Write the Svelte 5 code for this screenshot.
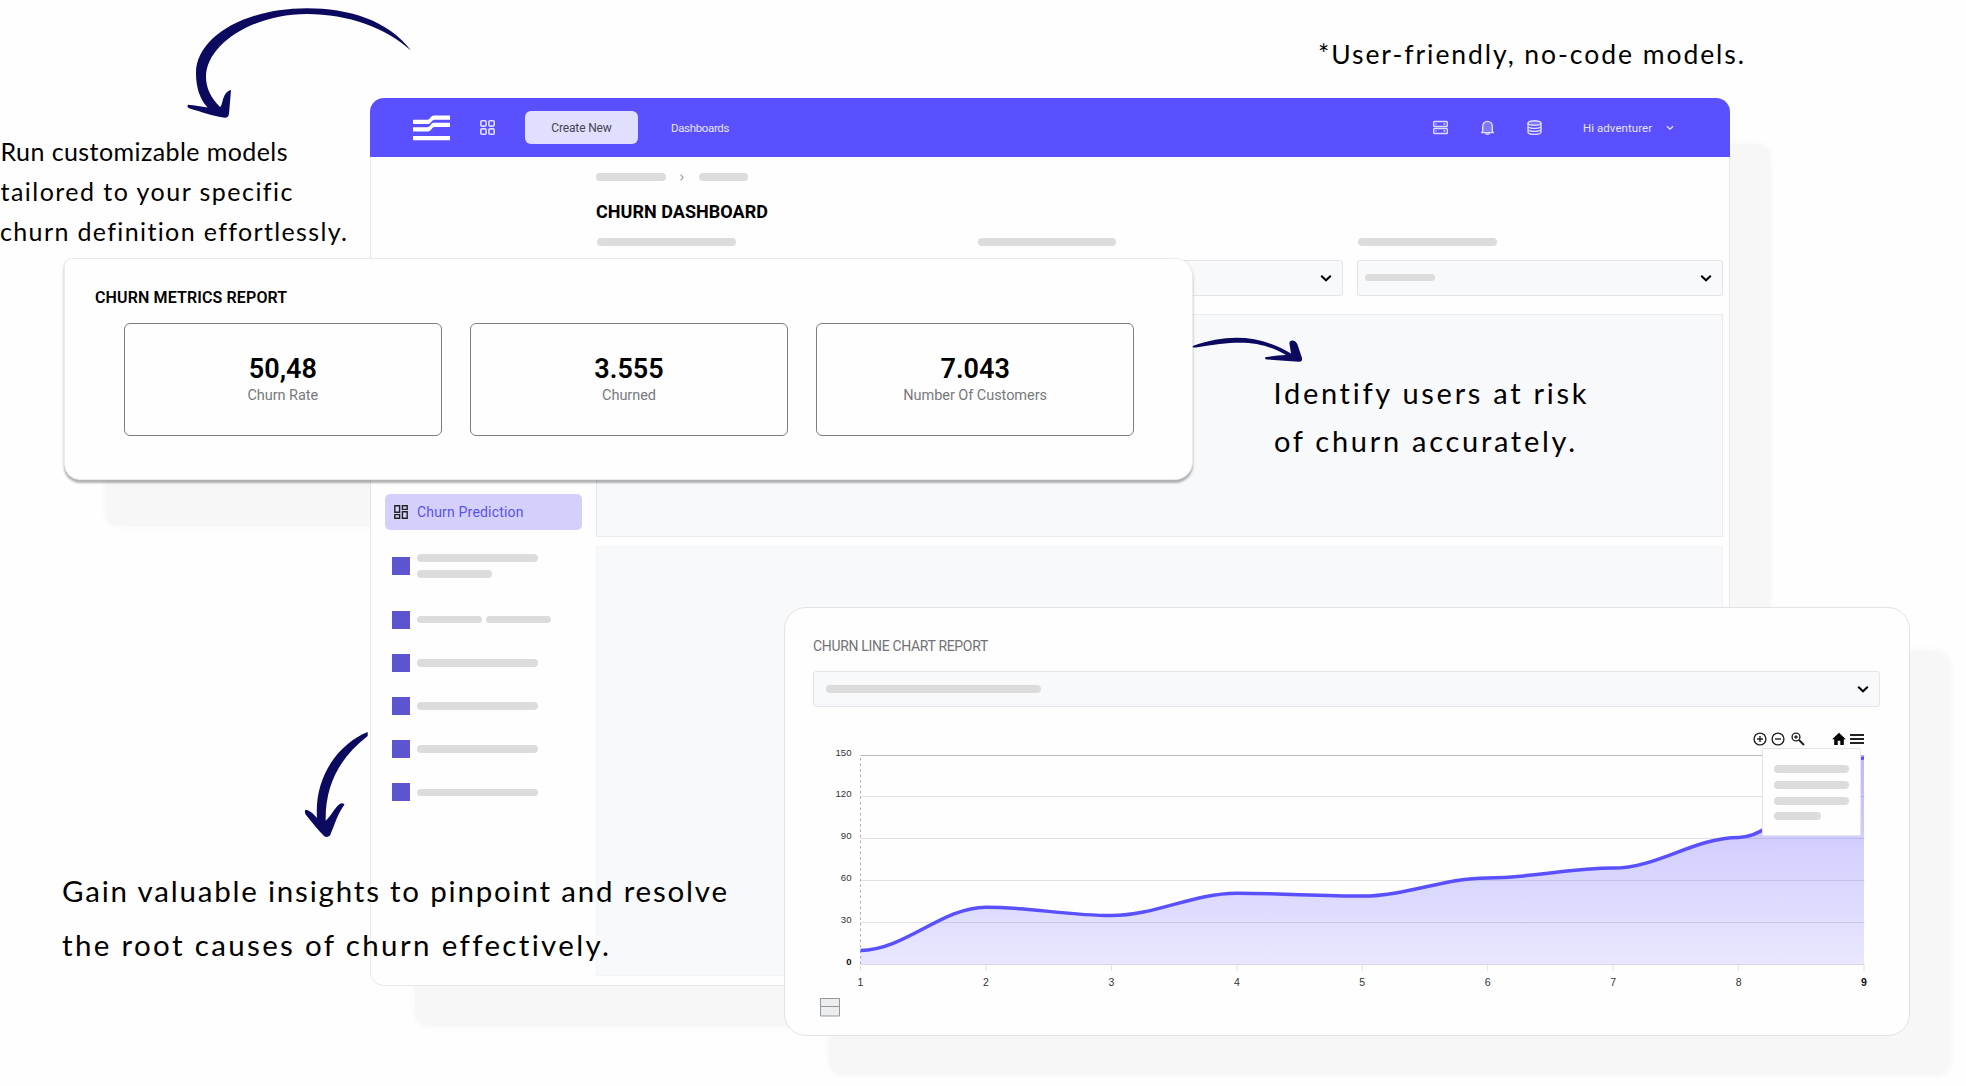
<script lang="ts">
    const notes = [
        { text: "Run customizable models", x: 0.5, y: 160.5, width: 287, size: 25 },
        { text: "tailored to your specific", x: 0.5, y: 200.5, width: 292, size: 25 },
        { text: "churn definition effortlessly.", x: 0, y: 240.5, width: 347, size: 25 },
        { text: "*User-friendly, no-code models.", x: 1318, y: 64, width: 426, size: 26.5 },
        { text: "Identify users at risk", x: 1273.5, y: 403.5, width: 313, size: 29 },
        { text: "of churn accurately.", x: 1274, y: 451.5, width: 301, size: 29 },
        { text: "Gain valuable insights to pinpoint and resolve", x: 62, y: 902, width: 665, size: 29.5 },
        { text: "the root causes of churn effectively.", x: 62, y: 956, width: 547, size: 29.5 },
    ];

    const metrics = [
        { value: "50,48", label: "Churn Rate" },
        { value: "3.555", label: "Churned" },
        { value: "7.043", label: "Number Of Customers" },
    ];

    const points: number[] = [10, 41, 35, 51, 49, 62, 69, 91, 148];
    const levels: number[] = [150, 120, 90, 60, 30, 0];
    const left = 47.5;
    const step = 125.44;
    const bottom = 218.4;

    const px = (i: number) => left + i * step;
    const py = (v: number) => bottom - (v * 209.3) / 150;

    // horizontal handles at every point, 35% of the gap long
    const line = points.reduce((path, v, i) => {
        if (i === 0) return `M${px(0)} ${py(v)}`;
        const h = step * 0.35;
        return `${path} C${px(i - 1) + h} ${py(points[i - 1])} ${px(i) - h} ${py(v)} ${px(i)} ${py(v)}`;
    }, "");
    const area = `${line} V${bottom} H${left} Z`;
</script>

{#snippet chevron()}
    <svg class="chevron" width="12" height="8" viewBox="0 0 12 8">
        <path d="M1.2 1.7 6 6.300l4.8-4.600" />
    </svg>
{/snippet}

<div class="stage">
    <div class="shade shade-window"></div>
    <div class="shade shade-metrics"></div>
    <div class="shade shade-chart"></div>

    <div class="window">
        <header>
            <svg class="logo" width="37" height="26" viewBox="0 0 37 26">
                <path d="M0 4.7h14.5c3 0 3-4.2 6.5-4.2h16v4.2H21.500c-3 0-3 4.2-6.500 4.2H0z" />
                <path d="M0 12.200h14.500c3 0 3-4.400 6.500-4.400h16v4.300H21.500c-3 0-3 4.400-6.500 4.400H0z" />
                <path d="M0 20.900h37v4.300H0z" />
            </svg>
            <svg class="grid-icon" width="15" height="15" viewBox="0 0 15 15">
                <rect x=".8" y=".8" width="5.300" height="5.300" rx="1" />
                <rect x="8.900" y=".8" width="5.300" height="5.300" rx="1" />
                <rect x=".8" y="8.900" width="5.300" height="5.300" rx="1" />
                <rect x="8.900" y="8.900" width="5.300" height="5.300" rx="1" />
            </svg>
            <button>Create New</button>
            <span class="nav">Dashboards</span>
            <div class="tools">
                <svg width="15" height="15" viewBox="0 0 15 15">
                    <rect x=".7" y="1.500" width="13.600" height="5" rx=".8" />
                    <rect x=".7" y="8.500" width="13.600" height="5" rx=".8" />
                    <path d="M10.500 4h1.800M2.500 4h1M10.500 11h1.800M2.500 11h1" />
                </svg>
                <svg width="15" height="15" viewBox="0 0 15 15">
                    <path class="tint" d="M2.700 12V6.200a4.800 4.800 0 0 1 9.600 0V12l1.600.6H1.100z" />
                    <path d="M5.600 13c.3 1.700 3.500 1.700 3.800 0" />
                </svg>
                <svg width="15" height="15" viewBox="0 0 15 15">
                    <ellipse class="tint" cx="7.500" cy="3" rx="6.500" ry="2.300" />
                    <path d="M1 3v9c0 3.200 13 3.200 13 0V3M1 6c0 3.200 13 3.200 13 0M1 9c0 3.200 13 3.200 13 0" />
                </svg>
            </div>
            <span class="user">Hi adventurer</span>
            <svg class="caret" width="8" height="6" viewBox="0 0 8 6">
                <path d="M1 1.200l3 3 3-3" />
            </svg>
        </header>

        <div class="body">
            <aside>
                <div class="active">
                    <svg width="14" height="14" viewBox="0 0 14 14">
                        <path d="M.8.8h4.800v6.400H.8zM8.400.8h4.800v3.600H8.400zM.8 9.600h4.800v3.600H.8zM8.400 6.800h4.800v6.400H8.400z" />
                    </svg>
                    Churn Prediction
                </div>
                <ul>
                    <li class="tall">
                        <i class="square"></i>
                        <div class="stack">
                            <i class="bar w122"></i>
                            <i class="bar w75"></i>
                        </div>
                    </li>
                    <li><i class="square"></i><i class="bar w66"></i><i class="bar w66 next"></i></li>
                    {#each [3, 4, 5, 6] as row (row)}
                        <li><i class="square"></i><i class="bar w122"></i></li>
                    {/each}
                </ul>
            </aside>

            <main>
                <div class="crumbs">
                    <i class="bar w70"></i>
                    <svg width="4" height="7" viewBox="0 0 4 7"><path d="M.6.6l2.500 2.900L.6 6.400" /></svg>
                    <i class="bar w50"></i>
                </div>
                <h1>CHURN DASHBOARD</h1>
                <div class="filters">
                    {#each [1, 2, 3] as filter (filter)}
                        <div>
                            <i class="bar label"></i>
                            <div class="select">
                                <i class="bar w70"></i>
                                {@render chevron()}
                            </div>
                        </div>
                    {/each}
                </div>
                <div class="panel small"></div>
                <div class="panel large"></div>
            </main>
        </div>
    </div>

    <section class="metrics">
        <h2>CHURN METRICS REPORT</h2>
        <div class="cards">
            {#each metrics as metric (metric.label)}
                <div class="card">
                    <strong>{metric.value}</strong>
                    <span>{metric.label}</span>
                </div>
            {/each}
        </div>
    </section>

    <section class="report">
        <h3>CHURN LINE CHART REPORT</h3>
        <div class="select">
            <i class="bar w215"></i>
            {@render chevron()}
        </div>
        <div class="toolbar">
            <svg width="14" height="14" viewBox="0 0 14 14">
                <circle cx="7" cy="7" r="5.900" /><path d="M7 4v6M4 7h6" />
            </svg>
            <svg class="minus" width="14" height="14" viewBox="0 0 14 14">
                <circle cx="7" cy="7" r="5.900" /><path d="M4 7h6" />
            </svg>
            <svg class="lens" width="14" height="14" viewBox="0 0 14 14">
                <circle cx="5" cy="5" r="3.900" />
                <path d="M5 3.200v3.600M3.200 5h3.600" />
                <path class="thick" d="M8 8l5 5" />
            </svg>
            <svg class="home" width="14" height="14" viewBox="0 0 14 14">
                <path d="M7 .8.200 7.200h2V13h3.500V8.800h2.600V13h3.500V7.200h2z" />
            </svg>
            <svg class="burger" width="14" height="14" viewBox="0 0 14 14">
                <path d="M0 3h14M0 7h14M0 11h14" />
            </svg>
        </div>
        <svg class="chart" width="1067" height="274" viewBox="0 0 1067 274">
            <defs>
                <linearGradient id="fade" x1="0" y1="0" x2="0" y2="1">
                    <stop offset="0" stop-color="#5b50ff" stop-opacity=".4" />
                    <stop offset=".45" stop-color="#5b50ff" stop-opacity=".26" />
                    <stop offset="1" stop-color="#5b50ff" stop-opacity=".13" />
                </linearGradient>
            </defs>
            {#each levels as level (level)}
                <path
                    class="grid-line"
                    class:top={level === 150}
                    d="M{left} {Math.floor(py(level)) + 0.5}H1051.500"
                />
                <text class="tick" class:bold={level === 0} x="38.500" y={py(level) + 0.5}>{level}</text>
            {/each}
            <path class="axis" d="M47.500 12V219" />
            <path fill="url(#fade)" d={area} />
            <path class="line" d={line} />
            {#each points as _, i (i)}
                <path class="grid-line" d="M{px(i)} 219v6" />
                <text class="number" class:bold={i === 8} x={px(i)} y="240">{i + 1}</text>
            {/each}
            <path class="legend" d="M7.500 252.500h19v17.500h-19zM7.500 260.500h19" />
        </svg>
        <div class="menu">
            <i class="bar"></i>
            <i class="bar"></i>
            <i class="bar"></i>
            <i class="bar short"></i>
        </div>
    </section>

    <svg class="notes" width="1966" height="1086" viewBox="0 0 1966 1086">
        <path d="M411 50.500C388 20 348 8.300 307 8.300C243 8.300 196 38 196 73C196 88 200 99 207.500 107.500C201 106.500 195 105.500 188 104.800Q186.500 107 189 108.200C202 112 212 116 225 117.800Q228.500 117.500 229 114L231 90C226 91 224 96 222.500 101Q221.500 106 220 107C211 98 206 88 206 77C206 45 252 14 307 14C348 14 386 28 411 50.500Z" />
        <path d="M1193 347.500Q1192 346 1194 345.500C1225 335 1257 333 1291 353.500L1289.500 344Q1289 340 1293 340.500Q1296 341 1297.500 344.500L1302 358Q1302.500 362 1299 361.700L1267 359.500Q1263.500 358.500 1266 357Q1275 355.500 1286 355C1262 341 1240 339.500 1196 347.500Z" />
        <path d="M367.700 732C340 743 314 775 317 818C313 813 309 810 305.500 809.700Q304 812 306 815C312 822 318 830 324 836Q327 838 330 835.500L335 823Q339 812 344.500 804.500Q342.500 802 339 804.500C334 809 331 816 325.700 820.700C325 785 340 757 367.700 736Z" />
        {#each notes as note (note.text)}
            <text x={note.x} y={note.y} font-size={note.size} textLength={note.width}>{note.text}</text>
        {/each}
    </svg>
</div>

<style>
    :global(body) {
        background: #fefefe;
    }

    .stage {
        position: relative;
        width: 1966px;
        height: 1086px;
        overflow: hidden;
        font-family: Roboto, "Liberation Sans", sans-serif;
        color: #000;
    }

    .stage * {
        box-sizing: border-box;
    }

    .shade {
        position: absolute;
        background: #f7f7f7;
        border-radius: 14px;
        box-shadow: 0 0 6px 1px #f7f7f7;
    }

    .shade-window {
        left: 415px;
        top: 144px;
        width: 1355px;
        height: 882px;
    }

    .shade-metrics {
        left: 106px;
        top: 300px;
        width: 1100px;
        height: 226px;
    }

    .shade-chart {
        left: 829px;
        top: 651px;
        width: 1121px;
        height: 424px;
    }

    .window {
        position: absolute;
        left: 370px;
        top: 98px;
        width: 1360px;
        height: 888px;
        border-radius: 14px;
        background: #fefefe;
        overflow: hidden;
    }

    header {
        height: 59px;
        padding-left: 43px;
        display: flex;
        align-items: center;
        background: #5a50ff;
        color: #e6e4ff;
        font-size: 11.5px;
    }

    .logo {
        fill: white;
    }

    .grid-icon {
        margin-left: 30px;
        fill: none;
        stroke: #dedcff;
        stroke-width: 1.6;
    }

    button {
        width: 113px;
        height: 33px;
        margin-left: 30px;
        padding: 0;
        border: none;
        border-radius: 6px;
        background: #e1dfff;
        color: #45454f;
        font: 12px Roboto, sans-serif;
        letter-spacing: -0.15px;
    }

    .nav {
        width: 58px;
        margin-left: 33px;
        letter-spacing: -0.35px;
    }

    .tools {
        margin-left: 704px;
        display: flex;
        gap: 32px;
        fill: none;
        stroke: #dedcff;
        stroke-width: 1.4;
    }

    .tint {
        fill: #8078ff;
    }

    .user {
        width: 71px;
        margin-left: 41px;
        white-space: nowrap;
        letter-spacing: 0.05px;
    }

    .caret {
        margin-left: 12px;
        fill: none;
        stroke: #e6e4ff;
        stroke-width: 1.3;
    }

    .body {
        height: 829px;
        display: grid;
        grid-template-columns: 225px 1127px;
        border: 1px solid #e8e8ea;
        border-top: none;
        border-radius: 0 0 14px 14px;
    }

    aside {
        padding: 337px 0 0 14px;
    }

    .active {
        width: 197px;
        height: 36px;
        padding-left: 9px;
        display: flex;
        align-items: center;
        gap: 9px;
        border-radius: 5px;
        background: #d4d0fc;
        color: #5a50f2;
        font-size: 14px;
        line-height: 20px;
        letter-spacing: 0.18px;
    }

    .active svg {
        fill: none;
        stroke: #222;
        stroke-width: 1.4;
    }

    ul {
        margin: 14px 0 0;
        padding: 0 0 0 7px;
        list-style: none;
    }

    li {
        height: 43.2px;
        display: flex;
        align-items: center;
    }

    .tall {
        height: 54px;
        padding-bottom: 10px;
    }

    .square {
        width: 18px;
        height: 18px;
        margin-right: 6.5px;
        background: #5d54cf;
    }

    .stack {
        display: grid;
        gap: 8.5px;
    }

    .bar {
        display: block;
        height: 7.5px;
        border-radius: 4px;
        background: #dcdcdc;
    }

    .w122 {
        width: 121.5px;
    }

    .w75 {
        width: 75px;
    }

    .w66 {
        width: 65.5px;
    }

    .next {
        margin-left: 3.5px;
    }

    .w70 {
        width: 70px;
    }

    .w50 {
        width: 49px;
    }

    .w215 {
        width: 215px;
    }

    .crumbs {
        height: 8px;
        margin-top: 16px;
        display: flex;
        align-items: center;
    }

    .crumbs svg {
        margin: 0 15px 0 14px;
        fill: none;
        stroke: #999;
        stroke-width: 1.1;
    }

    h1 {
        margin: 20px 0 0;
        font-size: 18px;
        line-height: 22px;
        font-weight: 700;
        letter-spacing: 0.03px;
    }

    .filters {
        margin-top: 15px;
        display: grid;
        grid-template-columns: repeat(3, 1fr);
        gap: 14.5px;
    }

    .label {
        width: 138.5px;
        margin: 0 0 14px 1px;
    }

    .select {
        height: 36px;
        padding: 0 10px 0 7px;
        display: flex;
        align-items: center;
        justify-content: space-between;
        border: 1px solid #e3e5ea;
        border-radius: 3px;
        background: #f8f9fb;
    }

    .chevron {
        fill: none;
        stroke: #000;
        stroke-width: 2;
    }

    .panel {
        background: #f8f9fb;
        border: 1px solid #e9ebee;
    }

    .small {
        height: 223px;
        margin-top: 18px;
    }

    .large {
        height: 430px;
        margin-top: 9px;
        border-color: #f3f4f7;
    }

    .metrics {
        position: absolute;
        left: 64px;
        top: 258px;
        width: 1129px;
        height: 222px;
        padding: 29px 58px 0 30px;
        border: 1px solid #ebebeb;
        border-radius: 8px 18px 18px 16px;
        background: #fefefe;
        box-shadow: 0 3px 2px rgba(0, 0, 0, 0.25), 0 2px 4px rgba(0, 0, 0, 0.08);
    }

    h2 {
        margin: 0;
        font-size: 16px;
        line-height: 20px;
        font-weight: 600;
        letter-spacing: 0.13px;
    }

    .cards {
        margin: 15px 0 0 29px;
        display: grid;
        grid-template-columns: repeat(3, 1fr);
        gap: 28.5px;
    }

    .card {
        height: 113px;
        padding-top: 31px;
        display: flex;
        flex-direction: column;
        align-items: center;
        border: 1px solid #7c7d83;
        border-radius: 6px;
    }

    .card strong {
        font-size: 27px;
        line-height: 28px;
        font-weight: 600;
    }

    .card span {
        margin-top: 3px;
        font-size: 14.5px;
        line-height: 20px;
        letter-spacing: -0.05px;
        color: #77797d;
    }

    .report {
        position: absolute;
        left: 784px;
        top: 607px;
        width: 1126px;
        height: 429px;
        padding: 28px 29px 0 28px;
        border: 1px solid #e2e3e5;
        border-radius: 22px;
        background: #fefefe;
    }

    h3 {
        margin: 0 0 15px;
        font-size: 14px;
        line-height: 20px;
        font-weight: 400;
        letter-spacing: -0.33px;
        color: #727377;
    }

    .report .select {
        padding-left: 12px;
    }

    .toolbar {
        height: 15px;
        margin: 24px 16px 0 0;
        display: flex;
        align-items: center;
        justify-content: flex-end;
        fill: none;
        stroke: #222;
        stroke-width: 1.4;
    }

    .minus {
        margin-left: 4px;
    }

    .lens {
        margin-left: 6px;
    }

    .thick {
        stroke-width: 2;
    }

    .home {
        margin-left: 27px;
        fill: #000;
        stroke: none;
    }

    .burger {
        margin-left: 4px;
        stroke-width: 1.8;
    }

    .chart {
        display: block;
        fill: none;
    }

    .grid-line {
        stroke: #e2e2e5;
    }

    .top {
        stroke: #b9babc;
    }

    .axis {
        stroke: #aaa;
        stroke-dasharray: 2.5 3;
    }

    .line {
        stroke: #5a50ff;
        stroke-width: 3.5;
    }

    .tick,
    .number {
        font-family: "Liberation Sans", sans-serif;
        font-size: 9.6px;
        fill: #333;
        text-anchor: end;
    }

    .number {
        font-size: 10.5px;
        text-anchor: middle;
    }

    .bold {
        font-weight: 700;
        fill: #111;
    }

    .legend {
        fill: #ecedef;
        stroke: #96979b;
    }

    .menu {
        position: absolute;
        left: 977px;
        top: 140px;
        width: 99px;
        height: 88px;
        padding: 16px 11px;
        display: grid;
        align-content: start;
        gap: 8.7px;
        border: 1px solid #e6e6e8;
        border-radius: 2px;
        background: #fefefe;
    }

    .short {
        width: 47px;
        margin-top: -1.500px;
    }

    .notes {
        position: absolute;
        left: 0;
        top: 0;
        fill: #0b0a5e;
    }

    .notes text {
        font-family: Lato, sans-serif;
        font-variant-ligatures: none;
        fill: #000;
    }
</style>
